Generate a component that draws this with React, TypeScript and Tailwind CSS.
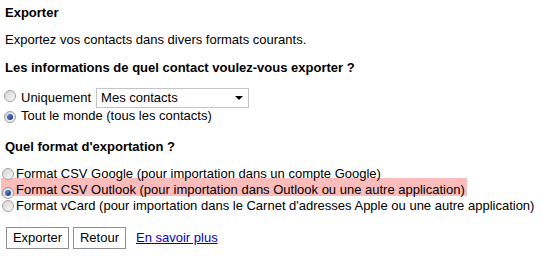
const Radio = ({ checked = false }: { checked?: boolean }) => (
  <span className="relative inline-flex h-[12px] w-[12px] shrink-0 items-center justify-center rounded-full border border-[#a0a0a0] bg-gradient-to-br from-[#d4d4d4] to-[#fafafa]">
    {checked && (
      <span className="h-[6px] w-[6px] rounded-full bg-gradient-to-br from-[#6a8fe0] to-[#1c2f80]" />
    )}
  </span>
)

const App = () => {
  return (
    <div className="min-h-screen w-full bg-white px-[5px] pt-[5px] font-['Liberation_Sans',Arial,sans-serif] text-[13px] leading-[16px] text-black">
      <div className="font-bold">Exporter</div>
      <div className="mt-[11px]">Exportez vos contacts dans divers formats courants.</div>
      <div className="mt-[12px] font-bold">Les informations de quel contact voulez-vous exporter ?</div>

      <div className="mt-[12px] flex h-[20px] items-center">
        <span className="ml-[-1px]"><Radio /></span>
        <span className="ml-[5px]">Uniquement</span>
        <div className="ml-[5px] flex h-[20px] w-[153px] items-center justify-between border border-[#c4c4c4] bg-white pl-[4px] pr-[4px]">
          <span>Mes contacts</span>
          <span className="mr-[1px] h-0 w-0 border-x-[4px] border-t-[4px] border-x-transparent border-t-black" />
        </div>
      </div>
      <div className="flex h-[16px] items-center">
        <span className="ml-[-1px]"><Radio checked /></span>
        <span className="ml-[5px]">Tout le monde (tous les contacts)</span>
      </div>

      <div className="mt-[15px] font-bold">Quel format d'exportation ?</div>

      <div className="ml-[-3px] mt-[11px] flex h-[16px] items-center">
        <Radio />
        <span className="ml-[2px]">Format CSV Google (pour importation dans un compte Google)</span>
      </div>
      <div className="ml-[-4px] mt-[-4px] flex h-[18px] w-fit items-start bg-[#fbbcbc] pl-[1px] pr-[2px] pt-[4px]">
        <span className="mt-[2px]"><Radio checked /></span>
        <span className="ml-[2px]">Format CSV Outlook (pour importation dans Outlook ou une autre application)</span>
      </div>
      <div className="ml-[-3px] mt-[2px] flex h-[16px] items-center">
        <Radio />
        <span className="ml-[2px]">Format vCard (pour importation dans le Carnet d'adresses Apple ou une autre application)</span>
      </div>

      <div className="mt-[13px] flex items-center">
        <button className="ml-[1px] h-[22px] w-[63px] border border-[#8f8f8f] bg-white text-[13px] leading-[16px]">Exporter</button>
        <button className="ml-[4px] h-[22px] w-[53px] border border-[#8f8f8f] bg-white text-[13px] leading-[16px]">Retour</button>
        <a href="#" className="ml-[10px] text-[#0000cc] underline">En savoir plus</a>
      </div>
    </div>
  )
}

export default App
